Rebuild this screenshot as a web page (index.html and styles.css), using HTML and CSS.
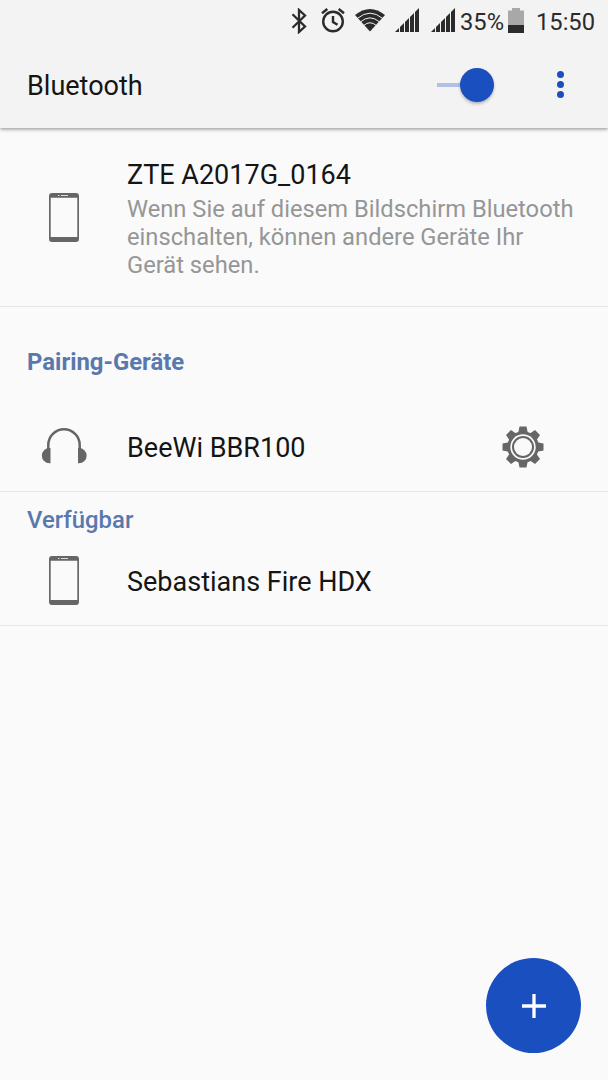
FILE: index.html
```html
<!DOCTYPE html>
<html lang="de">
<head>
<meta charset="utf-8">
<title>Bluetooth</title>
<link rel="stylesheet" href="styles.css">
</head>
<body>
<svg class="defs" width="0" height="0" aria-hidden="true">
  <symbol id="signal" viewBox="0 0 24 24">
    <path d="M0 24L4 20V24ZM5 24V19L9 15V24ZM10 24V14L14 10V24ZM15 24V9L19 5V24ZM20 24V4L24 0V24Z"/>
  </symbol>
  <symbol id="phone" viewBox="0 0 30 49">
    <path fill-rule="evenodd" d="M3 0H27Q30 0 30 3V46Q30 49 27 49H3Q0 49 0 46V3Q0 0 3 0ZM1.700 4.700V44H28.300V4.700Z"/>
    <path class="speaker" d="M9 2.500H10.500M12 2.500H19"/>
  </symbol>
</svg>
<div class="screen">
  <header class="top">
    <div class="status">
      <svg class="bt" width="16" height="26" viewBox="0 0 16 26"><path d="M1.500 6.300L14 18.500L8 24V2L14 7.500L1.500 19.700"/></svg>
      <svg class="alarm" width="24" height="25" viewBox="0 0 24 25"><circle cx="12" cy="13.500" r="9.800"/><path d="M12 8V14L16.500 16.700M1 5.300L6.300 1M17.700 1L23 5.300"/></svg>
      <svg class="wifi" width="30" height="23" viewBox="0 0 30 23"><path class="wifi-fill" d="M0 6Q15-6 30 6L15 22.500Z"/><path class="wifi-gap" d="M2.500 9.300Q15-1 27.500 9.300M5.500 12.900Q15 4.800 24.500 12.900M8.700 16.500Q15 11 21.300 16.500"/></svg>
      <svg class="sig-a" width="24" height="24"><use href="#signal"/></svg>
      <svg class="sig-b" width="24" height="24"><use href="#signal"/></svg>
      <span class="percent">35%</span>
      <svg class="battery" width="16" height="25" viewBox="0 0 16 25"><path fill="#a8a8a8" d="M0 2.500H4V0H12V2.500H16V17H0Z"/><path fill="#2b2b2b" d="M0 17H16V25H0Z"/></svg>
      <span class="clock">15:50</span>
    </div>
    <div class="appbar">
      <h1>Bluetooth</h1>
      <div class="switch"><span class="track"></span><span class="thumb"></span></div>
      <div class="more"><i></i><i></i><i></i></div>
    </div>
  </header>
  <main>
    <section class="row self">
      <svg class="phone" width="30" height="49"><use href="#phone"/></svg>
      <div class="text">
        <div class="name own">ZTE A2017G_0164</div>
        <p>Wenn Sie auf diesem Bildschirm Bluetooth<br>einschalten, können andere Geräte Ihr<br>Gerät sehen.</p>
      </div>
    </section>
    <h2 class="paired">Pairing-Geräte</h2>
    <section class="row device">
      <svg class="headphones" width="46" height="36" viewBox="0 0 46 36"><path class="band" d="M7.300 22V17A15.700 15.700 0 0 1 38.700 17V22"/><path d="M9.500 20V35.300H8.500A7.650 7.650 0 0 1 8.500 20ZM37 20V35.300H38A7.650 7.650 0 0 0 38 20Z"/></svg>
      <div class="name beewi">BeeWi BBR100</div>
      <svg class="gear" width="42" height="42" viewBox="-21 -21 42 42">
        <g><path id="tooth" d="M-4.800-14L-3.500-20.500H3.500L4.800-14ZM-4.800 14L-3.500 20.500H3.500L4.800 14Z"/><use href="#tooth" transform="rotate(45)"/><use href="#tooth" transform="rotate(90)"/><use href="#tooth" transform="rotate(135)"/></g>
        <circle r="15.800"/><circle class="hole" r="12.700"/><circle r="11"/><circle class="hole" r="9"/>
      </svg>
    </section>
    <h2 class="available">Verfügbar</h2>
    <section class="row found">
      <svg class="phone" width="30" height="49"><use href="#phone"/></svg>
      <div class="name fire">Sebastians Fire HDX</div>
    </section>
  </main>
  <button class="fab" aria-label="Hinzufügen"><svg width="24" height="24" viewBox="0 0 24 24"><path d="M12 0V24M0 12H24"/></svg></button>
</div>
</body>
</html>
```
FILE: styles.css
```css
* { box-sizing: border-box; }
body { margin: 0; background: #fafafa; color: #151515; font-family: Roboto, sans-serif; }
h1, h2, p { margin: 0; }
svg { display: block; flex: none; }
.defs { position: absolute; }
.screen { position: relative; width: 608px; height: 1080px; overflow: hidden; background: #fafafa; }
.top { position: relative; height: 128px; background: #f3f3f3; box-shadow: 0 1px 4px rgba(0,0,0,.45); }

.status { display: flex; align-items: flex-start; height: 42px; padding: 8px 0 0 291px; color: #2b2b2b; fill: #2b2b2b; font-size: 23.700px; line-height: 28px; white-space: nowrap; }
.bt { fill: none; stroke: #2b2b2b; stroke-width: 2.300; }
.alarm { margin-left: 14px; fill: none; stroke: #2b2b2b; stroke-width: 2.400; }
.wifi { margin: 1px 0 0 10px; }
.wifi-gap { fill: none; stroke: #f3f3f3; stroke-width: 1; }
.sig-a { margin-left: 10px; }
.sig-b { margin-left: 12px; }
.percent { width: 48px; padding-left: 5px; }
.battery { margin-left: 5px; }
.clock { margin-left: 12px; }

.appbar { display: flex; align-items: center; height: 86px; padding-left: 27px; }
h1 { width: 410px; padding-top: 2px; font-size: 27px; font-weight: 400; line-height: 32px; }
.switch { display: flex; align-items: center; width: 57px; height: 34px; margin-top: -1px; }
.track { width: 24px; height: 4px; background: #b3bfe3; }
.thumb { width: 34px; height: 34px; margin-left: -1px; border-radius: 50%; background: #194fbf; box-shadow: 0 2px 3px rgba(0,0,0,.25); }
.more { display: flex; flex-direction: column; gap: 3px; margin: -2px 0 0 63px; }
.more i { width: 7px; height: 7px; border-radius: 50%; background: #194fbf; }

.row { display: flex; align-items: center; border-bottom: 1px solid #e6e6e6; }
.name { font-size: 27px; line-height: 32px; white-space: nowrap; }
.phone { margin: 0 48px 0 49px; fill: #666; }
.speaker { fill: none; stroke: #ddd; stroke-width: 1; }
.self { height: 179px; }
.self .text { margin-top: 3px; }
.self p { color: #969696; font-size: 23.730px; line-height: 28px; margin-top: 4px; white-space: nowrap; }
h2 { padding-left: 27px; color: #5878ae; font-size: 23.900px; line-height: 28px; }
.paired { height: 95px; padding-top: 41px; font-weight: 700; }
.device { height: 90px; }
.headphones { margin: -2px 40px 0 41px; fill: #666; }
.band { fill: none; stroke: #666; stroke-width: 2.500; }
.beewi { width: 375px; padding-top: 2px; }
.gear { fill: #666; }
.hole { fill: #fafafa; }
.available { height: 45px; padding-top: 14px; font-weight: 500; }
.found { height: 89px; }
.found .phone { margin-top: -2px; }
.fire { padding-top: 1px; }

.fab { position: absolute; left: 486px; top: 958px; display: flex; align-items: center; justify-content: center; width: 95px; height: 95px; padding: 0; border: 0; border-radius: 50%; background: #194fbf; }
.fab path { stroke: #fff; stroke-width: 3.300; }
```
